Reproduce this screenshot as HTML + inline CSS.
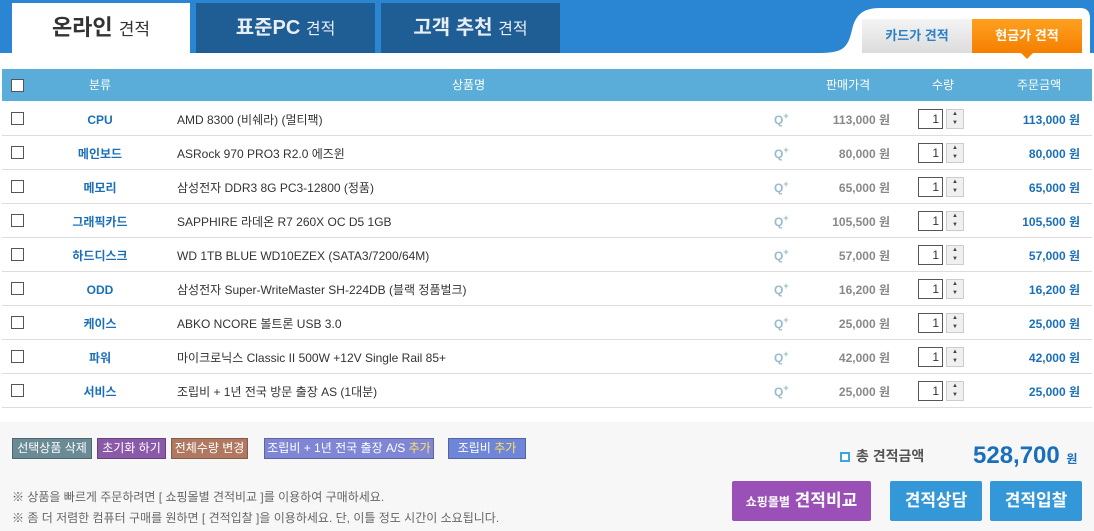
<!DOCTYPE html>
<html><head><meta charset="utf-8"><style>
*{margin:0;padding:0;box-sizing:border-box}
body{width:1094px;height:531px;background:#fff;font-family:"Liberation Sans","Noto Sans CJK KR",sans-serif;position:relative;overflow:hidden;font-size:12px;color:#333}
.a{position:absolute}
.hdr{left:0;top:0;width:1094px;height:53px;background:#2a86d2}
.tab{top:3px;height:50px;font-size:20px;font-weight:bold;text-align:center;line-height:50px;color:#e8eef5;background:#1f5e95}
.tab small{font-size:16px;font-weight:normal}
.thead{left:2px;top:69px;width:1090px;height:32px;background:#5aadd8;color:#fff;font-size:12px}
.thead span{position:absolute;top:0;line-height:32px;height:32px}
.row span{position:absolute;top:0;line-height:36px;height:33px;white-space:nowrap}
.row{position:absolute;left:2px;width:1090px;height:34px;border-bottom:1px solid #ddd;font-size:12px}
.cb{position:absolute;width:13px;height:13px;border:1px solid #555;background:#fff;left:9px;top:10px}
.row span.cat{left:48px;width:100px;text-align:center;color:#1a6fba;font-weight:bold}
.nm{left:175px;color:#333}
.q{left:772px;color:#9bb9cc;font-weight:bold;font-size:12px}
.q sup{font-size:9px;line-height:0}
.pr{right:202px;color:#888;font-weight:bold}
.row span.inp{left:916px;top:7px;width:25px;height:20px;border:1px solid #555;background:#fff;text-align:right;padding-right:3px;line-height:18px;font-size:12px}
.row span.sp{left:944px;top:7px;width:18px;height:20px;border:1px solid #ccc;background:#f0f0f0;font-size:6px;text-align:center;line-height:9px;color:#444}
.am{right:12px;color:#1a6fba;font-weight:bold}
.btn{top:438px;height:21px;line-height:19px;color:#fff;font-size:12px;text-align:center;border:1px solid rgba(0,0,0,.25);white-space:nowrap}
.big{top:481px;height:40px;line-height:40px;color:#fff;font-weight:bold;font-size:17px;text-align:center;border-radius:2px}
</style></head><body>
<div class="a hdr"></div>
<div class="a tab" style="left:12px;width:178px;background:#fff;color:#333;font-size:22px">온라인 <small style="font-size:17px">견적</small></div>
<div class="a tab" style="left:196px;width:179px">표준PC <small>견적</small></div>
<div class="a tab" style="left:381px;width:179px">고객 추천 <small>견적</small></div>
<svg class="a" style="left:800px;top:8px" width="294" height="45"><path d="M20 45 C45 45 48 38 52 22 C55 8 62 0 80 0 L280 0 Q290 0 290 10 L290 45 Z" fill="#fff"/></svg>
<div class="a" style="left:862px;top:19px;width:110px;height:34px;background:linear-gradient(#f4f4f4,#dcdcdc);color:#2a7fc8;font-weight:bold;font-size:13px;text-align:center;line-height:34px">카드가 견적</div>
<div class="a" style="left:972px;top:19px;width:110px;height:34px;background:linear-gradient(#ffa020,#f57f00);color:#fff;font-weight:bold;font-size:13px;text-align:center;line-height:34px">현금가 견적</div>
<div class="a" style="left:1021px;top:53px;width:0;height:0;border-left:6px solid transparent;border-right:6px solid transparent;border-top:6px solid #f58200"></div>
<div class="a thead">
<div class="cb" style="top:10px"></div>
<span style="left:48px;width:100px;text-align:center">분류</span>
<span style="left:450px">상품명</span>
<span style="left:824px">판매가격</span>
<span style="left:930px">수량</span>
<span style="left:1015px">주문금액</span>
</div>
<div class="row" style="top:102px"><div class="cb"></div><span class="cat">CPU</span><span class="nm">AMD 8300 (비쉐라) (멀티팩)</span><span class="q">Q<sup>+</sup></span><span class="pr">113,000 원</span><span class="inp">1</span><span class="sp">▲<br>▼</span><span class="am">113,000 원</span></div>
<div class="row" style="top:136px"><div class="cb"></div><span class="cat">메인보드</span><span class="nm">ASRock 970 PRO3 R2.0 에즈윈</span><span class="q">Q<sup>+</sup></span><span class="pr">80,000 원</span><span class="inp">1</span><span class="sp">▲<br>▼</span><span class="am">80,000 원</span></div>
<div class="row" style="top:170px"><div class="cb"></div><span class="cat">메모리</span><span class="nm">삼성전자 DDR3 8G PC3-12800 (정품)</span><span class="q">Q<sup>+</sup></span><span class="pr">65,000 원</span><span class="inp">1</span><span class="sp">▲<br>▼</span><span class="am">65,000 원</span></div>
<div class="row" style="top:204px"><div class="cb"></div><span class="cat">그래픽카드</span><span class="nm">SAPPHIRE 라데온 R7 260X OC D5 1GB</span><span class="q">Q<sup>+</sup></span><span class="pr">105,500 원</span><span class="inp">1</span><span class="sp">▲<br>▼</span><span class="am">105,500 원</span></div>
<div class="row" style="top:238px"><div class="cb"></div><span class="cat">하드디스크</span><span class="nm">WD 1TB BLUE WD10EZEX (SATA3/7200/64M)</span><span class="q">Q<sup>+</sup></span><span class="pr">57,000 원</span><span class="inp">1</span><span class="sp">▲<br>▼</span><span class="am">57,000 원</span></div>
<div class="row" style="top:272px"><div class="cb"></div><span class="cat">ODD</span><span class="nm">삼성전자 Super-WriteMaster SH-224DB (블랙 정품벌크)</span><span class="q">Q<sup>+</sup></span><span class="pr">16,200 원</span><span class="inp">1</span><span class="sp">▲<br>▼</span><span class="am">16,200 원</span></div>
<div class="row" style="top:306px"><div class="cb"></div><span class="cat">케이스</span><span class="nm">ABKO NCORE 볼트론 USB 3.0</span><span class="q">Q<sup>+</sup></span><span class="pr">25,000 원</span><span class="inp">1</span><span class="sp">▲<br>▼</span><span class="am">25,000 원</span></div>
<div class="row" style="top:340px"><div class="cb"></div><span class="cat">파워</span><span class="nm">마이크로닉스 Classic II 500W +12V Single Rail 85+</span><span class="q">Q<sup>+</sup></span><span class="pr">42,000 원</span><span class="inp">1</span><span class="sp">▲<br>▼</span><span class="am">42,000 원</span></div>
<div class="row" style="top:374px"><div class="cb"></div><span class="cat">서비스</span><span class="nm">조립비 + 1년 전국 방문 출장 AS (1대분)</span><span class="q">Q<sup>+</sup></span><span class="pr">25,000 원</span><span class="inp">1</span><span class="sp">▲<br>▼</span><span class="am">25,000 원</span></div>
<div class="a" style="left:0;top:422px;width:1094px;height:109px;background:#f7f7f7"></div>
<div class="a btn" style="left:12px;width:80px;background:#6a8a95">선택상품 삭제</div>
<div class="a btn" style="left:97px;width:69px;background:#8a5aa8">초기화 하기</div>
<div class="a btn" style="left:171px;width:77px;background:#b07860">전체수량 변경</div>
<div class="a btn" style="left:264px;width:170px;background:#7f86d6">조립비 + 1년 전국 출장 A/S <span style="color:#ffe35a">추가</span></div>
<div class="a btn" style="left:448px;width:78px;background:#6f86d8">조립비 <span style="color:#ffe35a">추가</span></div>
<div class="a" style="left:12px;top:487px;color:#666;font-size:12px;line-height:21px">※ 상품을 빠르게 주문하려면 [ 쇼핑몰별 견적비교 ]를 이용하여 구매하세요.<br>※ 좀 더 저렴한 컴퓨터 구매를 원하면 [ 견적입찰 ]을 이용하세요. 단, 이틀 정도 시간이 소요됩니다.</div>
<div class="a" style="left:840px;top:452px;width:10px;height:10px;border:2px solid #3aa8e0;background:#fff"></div>
<div class="a" style="left:856px;top:446px;font-size:14px;font-weight:bold;color:#555;line-height:20px">총 견적금액</div>
<div class="a" style="left:973px;top:440px;font-size:24px;font-weight:bold;color:#1a6fba;line-height:32px">528,700 <span style="font-size:12px">원</span></div>
<div class="a big" style="left:732px;width:139px;background:#9b50b8;font-size:17px"><span style="font-size:12px">쇼핑몰별</span> 견적비교</div>
<div class="a big" style="left:890px;width:92px;background:#3498d8">견적상담</div>
<div class="a big" style="left:990px;width:92px;background:#3498d8">견적입찰</div>
</body></html>
